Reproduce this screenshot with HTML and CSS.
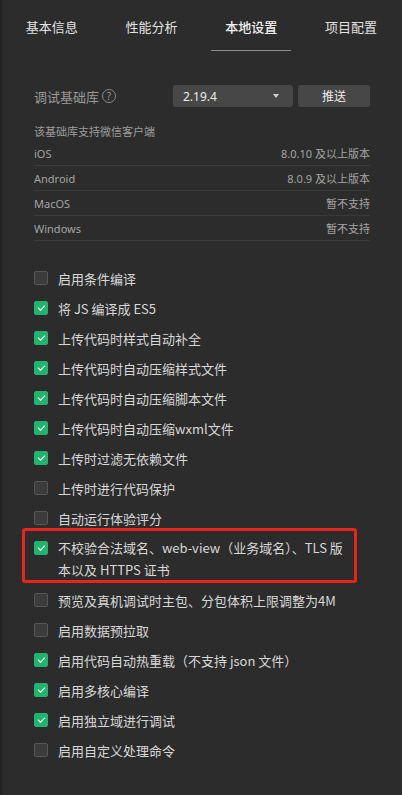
FILE: index.html
```html
<!DOCTYPE html>
<html lang="zh-CN">
<head>
<meta charset="utf-8">
<title>本地设置</title>
<link rel="stylesheet" href="styles.css">
</head>
<body>
<div class="panel">
  <nav class="tabs">
    <div class="tab"><span>基本信息</span></div>
    <div class="tab"><span>性能分析</span></div>
    <div class="tab active"><span>本地设置</span></div>
    <div class="tab"><span>项目配置</span></div>
  </nav>

  <section class="settings">
    <div class="lib-row">
      <div class="lib-label">调试基础库<span class="help">?</span></div>
      <div class="select"><span>2.19.4</span><span class="caret"></span></div>
      <div class="btn">推送</div>
    </div>

    <div class="support">
      <div class="support-title">该基础库支持微信客户端</div>
      <div class="support-row"><span>iOS</span><span>8.0.10 及以上版本</span></div>
      <div class="support-row"><span>Android</span><span>8.0.9 及以上版本</span></div>
      <div class="support-row"><span>MacOS</span><span>暂不支持</span></div>
      <div class="support-row"><span>Windows</span><span>暂不支持</span></div>
    </div>

    <ul class="options">
      <li class="opt"><span class="cb"></span><span class="txt">启用条件编译</span></li>
      <li class="opt"><span class="cb on"></span><span class="txt">将 JS 编译成 ES5</span></li>
      <li class="opt"><span class="cb on"></span><span class="txt">上传代码时样式自动补全</span></li>
      <li class="opt"><span class="cb on"></span><span class="txt">上传代码时自动压缩样式文件</span></li>
      <li class="opt"><span class="cb on"></span><span class="txt">上传代码时自动压缩脚本文件</span></li>
      <li class="opt"><span class="cb on"></span><span class="txt">上传代码时自动压缩wxml文件</span></li>
      <li class="opt"><span class="cb on"></span><span class="txt">上传时过滤无依赖文件</span></li>
      <li class="opt"><span class="cb"></span><span class="txt">上传时进行代码保护</span></li>
      <li class="opt"><span class="cb"></span><span class="txt">自动运行体验评分</span></li>
      <li class="opt multi"><span class="mark"></span><span class="cb on"></span><span class="txt">不校验合法域名、web-view（业务域名）、TLS 版<br>本以及 HTTPS 证书</span></li>
      <li class="opt"><span class="cb"></span><span class="txt">预览及真机调试时主包、分包体积上限调整为4M</span></li>
      <li class="opt"><span class="cb"></span><span class="txt">启用数据预拉取</span></li>
      <li class="opt"><span class="cb on"></span><span class="txt">启用代码自动热重载（不支持 json 文件）</span></li>
      <li class="opt"><span class="cb on"></span><span class="txt">启用多核心编译</span></li>
      <li class="opt"><span class="cb on"></span><span class="txt">启用独立域进行调试</span></li>
      <li class="opt"><span class="cb"></span><span class="txt">启用自定义处理命令</span></li>
    </ul>
  </section>
</div>
</body>
</html>
```

FILE: styles.css
```css
html, body {
  margin: 0;
  padding: 0;
  background: #2c2c2c;
}

body {
  font-family: "Noto Sans", "Noto Sans CJK SC", sans-serif;
  color: #d8d8d8;
  width: 402px;
  height: 795px;
  overflow: hidden;
}

.panel {
  height: 795px;
  border-left: 2px solid #232323;
  border-right: 1px solid #323232;
  box-sizing: border-box;
}

.tabs {
  display: flex;
  height: 51px;
}

.tab {
  width: 100px;
  display: flex;
  justify-content: center;
  font-family: "Noto Sans CJK SC", sans-serif;
  font-size: 13px;
  color: #e2e2e2;
}

.tab span {
  display: block;
  padding: 18px 14px 14px;
  line-height: 18px;
  height: 18px;
}

.tab.active span {
  color: #f2f2f2;
  font-weight: 500;
  border-bottom: 1px solid #8c8c8c;
}

.settings {
  padding: 34px 31px 0 32px;
}

.lib-row {
  display: flex;
  align-items: center;
  height: 22px;
}

.lib-label {
  width: 139px;
  display: flex;
  align-items: center;
  font-family: "Noto Sans CJK SC", sans-serif;
  font-size: 13px;
  color: #9a9a9a;
}

.help {
  width: 12px;
  height: 12px;
  border: 1px solid #8a8a8a;
  border-radius: 50%;
  margin-left: 3px;
  font-size: 10px;
  line-height: 12px;
  text-align: center;
  color: #9a9a9a;
  font-family: "Noto Sans", sans-serif;
}

.select {
  width: 120px;
  height: 22px;
  box-sizing: border-box;
  background: #474747;
  border-radius: 3px;
  display: flex;
  align-items: center;
  justify-content: space-between;
  padding: 0 14px 0 10px;
  font-family: "Noto Sans", sans-serif;
  font-size: 12px;
  color: #ececec;
}

.caret {
  width: 0;
  height: 0;
  border-left: 3px solid transparent;
  border-right: 3px solid transparent;
  border-top: 4px solid #d0d0d0;
}

.btn {
  width: 72px;
  height: 22px;
  margin-left: 5px;
  background: #474747;
  border-radius: 3px;
  text-align: center;
  line-height: 22px;
  font-family: "Noto Sans CJK SC", sans-serif;
  font-size: 12px;
  color: #ececec;
}

.support {
  margin-top: 14px;
  font-size: 11px;
}

.support-title {
  line-height: 20px;
  color: #9c9c9c;
  font-family: "Noto Sans CJK SC", sans-serif;
}

.support-row {
  display: flex;
  justify-content: space-between;
  height: 24px;
  line-height: 25px;
  border-bottom: 1px solid #3a3a3a;
  color: #a4a4a4;
}

.options {
  list-style: none;
  margin: 22px 0 0;
  padding: 0;
}

.opt {
  display: flex;
  align-items: center;
  height: 30px;
  font-family: "Noto Sans CJK SC", sans-serif;
  font-size: 13px;
  color: #d8d8d8;
}

.cb {
  flex: none;
  width: 14px;
  height: 14px;
  box-sizing: border-box;
  border: 1px solid #585858;
  background: #3c3c3c;
  border-radius: 2px;
  margin-right: 10px;
  position: relative;
}

.cb.on {
  background: #20b46e;
  border-color: #20b46e;
}

.cb.on::after {
  content: "";
  position: absolute;
  left: 3px;
  top: 3px;
  width: 6px;
  height: 3px;
  border-left: 1.5px solid #fff;
  border-bottom: 1.5px solid #fff;
  transform: rotate(-45deg);
  transform-origin: center;
}

.opt.multi {
  position: relative;
  height: auto;
  align-items: flex-start;
  padding: 4px 0;
}

.opt.multi .cb {
  margin-top: 4px;
}

.opt.multi .txt {
  line-height: 22px;
}

.mark {
  position: absolute;
  left: -12px;
  top: -5px;
  width: 335px;
  height: 55px;
  box-sizing: border-box;
  border: 3px solid #e8241b;
  border-radius: 3px;
}
```
